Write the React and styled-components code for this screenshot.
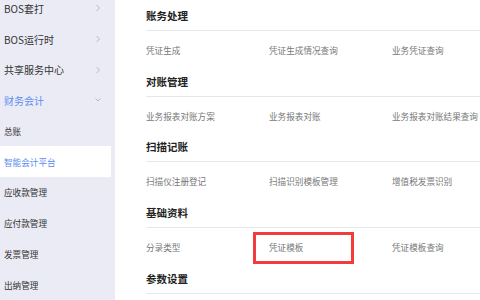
import styled, { createGlobalStyle } from "styled-components";

const GlobalStyle = createGlobalStyle`
  html, body {
    margin: 0;
    padding: 0;
    background: #fff;
    font-family: "Noto Sans CJK SC", "Liberation Sans", sans-serif;
  }
  * { box-sizing: border-box; }
`;

const Page = styled.div`
  display: flex;
  width: 480px;
  height: 300px;
  overflow: hidden;
`;

const Sidebar = styled.nav`
  width: 115px;
  flex-shrink: 0;
  background: #ebebf5;
  overflow: hidden;
`;

const MenuList = styled.ul`
  list-style: none;
  margin: -7px 0 0;
  padding: 0 4px 0 0;
`;

const MenuItem = styled.li`
  display: flex;
  align-items: center;
  justify-content: space-between;
  height: 30.7px;
  padding: 0 10px 0 4px;
  font-size: ${(p) => (p.sub ? "8.6px" : "10px")};
  color: ${(p) => (p.active || p.open ? "#5b8ef2" : "#333")};
  background: ${(p) => (p.active ? "#fff" : "transparent")};
`;

const Chevron = ({ down }) => (
  <svg width="6" height="8" viewBox="0 0 6 8">
    {down ? (
      <polyline points="0.5,2.5 3,5 5.5,2.5" fill="none" stroke="#aaa" strokeWidth="0.8" />
    ) : (
      <polyline points="1.5,1 4.5,4 1.5,7" fill="none" stroke="#aaa" strokeWidth="0.8" />
    )}
  </svg>
);

const Main = styled.main`
  flex: 1;
  padding-left: 31px;
  background: #fff;
`;

const Section = styled.section`
  height: 65.7px;
`;

const SectionTitle = styled.h3`
  margin: 0;
  height: 31px;
  line-height: 32px;
  font-size: 10.5px;
  font-weight: 700;
  color: #222;
  border-bottom: 1px solid #e6e6ef;
`;

const Row = styled.div`
  display: grid;
  grid-template-columns: 123px 123px 1fr;
  padding-top: 13px;
`;

const Entry = styled.a`
  position: relative;
  font-size: 8.6px;
  line-height: 12px;
  color: #777;
  white-space: nowrap;

  ${(p) =>
    p.marked &&
    `
    &::after {
      content: "";
      position: absolute;
      left: -16px;
      top: -9px;
      width: 95px;
      height: 26px;
      border: 3px solid #f23b3d;
    }
  `}
`;

const menu = [
  { label: "BOS套打" },
  { label: "BOS运行时" },
  { label: "共享服务中心" },
  { label: "财务会计", open: true },
  { label: "总账", sub: true },
  { label: "智能会计平台", sub: true, active: true },
  { label: "应收款管理", sub: true },
  { label: "应付款管理", sub: true },
  { label: "发票管理", sub: true },
  { label: "出纳管理", sub: true },
];

const sections = [
  { title: "账务处理", items: ["凭证生成", "凭证生成情况查询", "业务凭证查询"] },
  { title: "对账管理", items: ["业务报表对账方案", "业务报表对账", "业务报表对账结果查询"] },
  { title: "扫描记账", items: ["扫描仪注册登记", "扫描识别模板管理", "增值税发票识别"] },
  { title: "基础资料", items: ["分录类型", "凭证模板", "凭证模板查询"] },
  { title: "参数设置", items: [] },
];

export default function App() {
  return (
    <>
      <GlobalStyle />
      <Page>
        <Sidebar>
          <MenuList>
            {menu.map((m) => (
              <MenuItem key={m.label} sub={m.sub} active={m.active} open={m.open}>
                <span>{m.label}</span>
                {!m.sub && <Chevron down={m.open} />}
              </MenuItem>
            ))}
          </MenuList>
        </Sidebar>
        <Main>
          {sections.map((s) => (
            <Section key={s.title}>
              <SectionTitle>{s.title}</SectionTitle>
              {s.items.length > 0 && (
                <Row>
                  {s.items.map((it) => (
                    <Entry key={it} marked={it === "凭证模板"}>
                      {it}
                    </Entry>
                  ))}
                </Row>
              )}
            </Section>
          ))}
        </Main>
      </Page>
    </>
  );
}
